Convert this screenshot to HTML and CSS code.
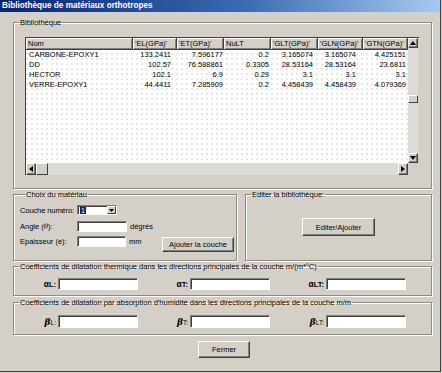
FILE: index.html
```html
<!DOCTYPE html>
<html lang="fr">
<head>
<meta charset="utf-8">
<title>Bibliothèque de matériaux orthotropes</title>
<link rel="stylesheet" href="styles.css">
</head>
<body>
<div class="window">
  <div class="titlebar">Bibliothèque de matériaux orthotropes</div>
  <div class="content">
    <fieldset class="group g-lib">
      <legend>Bibliothèque</legend>
      <div class="listview">
        <div class="list-main">
          <table class="grid">
            <colgroup>
              <col class="c-nom"><col class="c-el"><col class="c-et"><col class="c-nu"><col class="c-glt"><col class="c-gln"><col class="c-gtn">
            </colgroup>
            <thead>
              <tr><th>Nom</th><th>'EL(GPa)'</th><th>'ET(GPa)'</th><th>NuLT</th><th>'GLT(GPa)'</th><th>'GLN(GPa)'</th><th>'GTN(GPa)'</th></tr>
            </thead>
            <tbody>
              <tr><td>CARBONE-EPOXY1</td><td>133.2411</td><td>7.596177</td><td>0.2</td><td>3.165074</td><td>3.165074</td><td>4.425151</td></tr>
              <tr><td>DD</td><td>102.57</td><td>76.588861</td><td>0.3305</td><td>28.53164</td><td>28.53164</td><td>23.6811</td></tr>
              <tr><td>HECTOR</td><td>102.1</td><td>6.9</td><td>0.29</td><td>3.1</td><td>3.1</td><td>3.1</td></tr>
              <tr><td>VERRE-EPOXY1</td><td>44.4411</td><td>7.285909</td><td>0.2</td><td>4.458439</td><td>4.458439</td><td>4.079369</td></tr>
            </tbody>
          </table>
        </div>
        <div class="vscroll">
          <div class="sbtn sbtn-v"><svg width="6" height="4" viewBox="0 0 6 4"><polygon points="0,4 6,4 3,0" fill="#000"/></svg></div>
          <div class="vtrack"><div class="vthumb"></div></div>
          <div class="sbtn sbtn-v"><svg width="6" height="4" viewBox="0 0 6 4"><polygon points="0,0 6,0 3,4" fill="#000"/></svg></div>
        </div>
        <div class="hscroll">
          <div class="sbtn sbtn-h"><svg width="4" height="6" viewBox="0 0 4 6"><polygon points="4,0 4,6 0,3" fill="#000"/></svg></div>
          <div class="hthumb"></div>
          <div class="htrack"></div>
          <div class="sbtn sbtn-h"><svg width="4" height="6" viewBox="0 0 4 6"><polygon points="0,0 0,6 4,3" fill="#000"/></svg></div>
        </div>
        <div class="corner"></div>
      </div>
    </fieldset>

    <div class="row2">
      <fieldset class="group g-choix">
        <legend>Choix du matériau</legend>
        <div class="frow frow-1">
          <span class="flabel">Couche numéro:</span>
          <div class="combo">
            <div class="combo-field"><span class="combo-sel">1</span></div>
            <div class="combo-btn"><svg width="5" height="3" viewBox="0 0 5 3"><polygon points="0,0 5,0 2.5,3" fill="#000"/></svg></div>
          </div>
        </div>
        <div class="frow frow-2">
          <span class="flabel">Angle (<i>θ</i>):</span>
          <div class="input in-angle"></div>
          <span class="unit">dégrés</span>
        </div>
        <div class="frow frow-3">
          <span class="flabel">Epaisseur (e):</span>
          <div class="input in-ep"></div>
          <span class="unit unit-mm">mm</span>
          <button class="btn btn-ajouter">Ajouter la couche</button>
        </div>
      </fieldset>
      <fieldset class="group g-edit">
        <legend>Editer la bibliothèque:</legend>
        <button class="btn btn-editer">Editer/Ajouter</button>
      </fieldset>
    </div>

    <fieldset class="group g-therm">
      <legend>Coefficients de dilatation thermique dans les directions principales de la couche m/(m*°C)</legend>
      <div class="coefs">
        <span class="clabel cl-1"><b class="alpha">α</b><b>L:</b></span><div class="input cin"></div>
        <span class="clabel cl-2"><b class="alpha">α</b><b>T:</b></span><div class="input cin"></div>
        <span class="clabel cl-3"><b class="alpha">α</b><b>LT:</b></span><div class="input cin"></div>
      </div>
    </fieldset>

    <fieldset class="group g-humid">
      <legend>Coefficients de dilatation par absorption d'humidité dans les directions principales de la couche m/m</legend>
      <div class="coefs">
        <span class="clabel cl-1"><i class="beta">β</i><span class="sub">L:</span></span><div class="input cin"></div>
        <span class="clabel cl-2"><i class="beta">β</i><span class="sub">T:</span></span><div class="input cin"></div>
        <span class="clabel cl-3"><i class="beta">β</i><span class="sub">LT:</span></span><div class="input cin"></div>
      </div>
    </fieldset>

    <div class="footer">
      <button class="btn btn-fermer">Fermer</button>
    </div>
  </div>
</div>
</body>
</html>
```

FILE: styles.css
```css
html, body {
  margin: 0;
  padding: 0;
  background: #d4d0c8;
}
body {
  font-family: "Liberation Sans", Arial, sans-serif;
  font-size: 7.5px;
  color: #000;
}
.window {
  width: 441px;
  height: 372px;
  box-sizing: border-box;
  border-right: 1px solid #404040;
  border-bottom: 1px solid #404040;
  background: #d4d0c8;
  overflow: hidden;
}
.titlebar {
  height: 12px;
  line-height: 12px;
  padding-left: 2px;
  color: #fff;
  font-weight: bold;
  font-size: 8.2px;
  background: linear-gradient(to right, #0a246a 0%, #3a6ab0 55%, #a6caf0 100%);
}
.content {
  width: 419px;
  padding-left: 13px;
}

/* group boxes */
.group {
  margin: 0;
  padding: 0;
  min-width: 0;
  box-sizing: border-box;
  border: 1px solid #8e8a84;
  box-shadow: inset 1px 1px 0 #fff, 1px 1px 0 #fff;
}
.group legend {
  margin-left: 5px;
  padding: 2px 1px 0;
  line-height: 8px;
  font-size: 7.5px;
}
.g-lib {
  margin-top: 5px;
  width: 419px;
  height: 172px;
}

/* list view */
.listview {
  margin: 10px 0 0 11px;
  width: 393px;
  display: grid;
  grid-template-columns: 382px 10px;
  grid-template-rows: 125px 12px;
  border-left: 1px solid #404040;
  border-top: 1px solid #404040;
}
.list-main {
  overflow: hidden;
  background-color: #fff;
  background-image: radial-gradient(circle at 1px 1px, #d8d8d8 0.6px, transparent 0.9px);
  background-size: 5px 5px;
}
.grid {
  table-layout: fixed;
  border-collapse: separate;
  border-spacing: 0;
  width: 382px;
  font-size: 7.5px;
}
.c-nom { width: 107px; }
.c-el { width: 44px; }
.c-et { width: 47px; }
.c-nu { width: 47px; }
.c-glt { width: 47px; }
.c-gln { width: 45px; }
.c-gtn { width: 45px; }
.grid th {
  padding: 0 0 0 2px;
  line-height: 11px;
  font-weight: normal;
  text-align: left;
  white-space: nowrap;
  overflow: hidden;
  background: #d4d0c8;
  border-right: 1px solid #404040;
  border-bottom: 1px solid #404040;
  box-shadow: inset 1px 1px 0 #fff, inset -1px -1px 0 #808080;
}
.grid td {
  padding: 0 3px 0 0;
  line-height: 10px;
  white-space: nowrap;
  overflow: hidden;
  text-align: right;
}
.grid td:first-child { text-align: left; padding: 0 0 0 3px; }
.grid td:nth-child(2) { padding-right: 6px; }
.grid td:nth-child(3) { padding-right: 1px; text-overflow: clip; }
.grid td:nth-child(4) { padding-right: 2px; }
.grid td:nth-child(5) { padding-right: 5px; }
.grid td:nth-child(6) { padding-right: 7px; }
.grid td:nth-child(7) { padding-right: 2px; }

.sbtn {
  box-sizing: border-box;
  background: #d4d0c8;
  border: 1px solid;
  border-color: #fff #404040 #404040 #fff;
  box-shadow: inset -1px -1px 0 #808080;
  display: flex;
  align-items: center;
  justify-content: center;
}
.sbtn svg { display: block; }
.vscroll {
  display: flex;
  flex-direction: column;
}
.sbtn-v { height: 10px; }
.vtrack {
  flex: 1;
  background: #dedbd6;
}
.vthumb {
  margin-top: 47px;
  height: 8px;
  box-sizing: border-box;
  background: #d4d0c8;
  border: 1px solid;
  border-color: #fff #404040 #404040 #fff;
}
.hscroll {
  display: flex;
}
.sbtn-h { width: 10px; }
.hthumb {
  width: 12px;
  box-sizing: border-box;
  background: #d4d0c8;
  border: 1px solid;
  border-color: #fff #404040 #404040 #fff;
}
.htrack {
  flex: 1;
  background: #dedbd6;
}
.corner { background: #d4d0c8; }

/* second row */
.row2 {
  display: flex;
  gap: 8px;
}
.g-choix {
  width: 224px;
  height: 72px;
  padding-left: 6px;
}
.g-edit {
  width: 187px;
  height: 72px;
}
.frow {
  display: flex;
  align-items: center;
}
.frow-1 { margin-top: 6px; height: 10px; }
.frow-2 { margin-top: 6px; height: 11px; }
.frow-3 { margin-top: 4px; height: 11px; align-items: flex-start; }
.frow-3 .flabel, .frow-3 .unit { line-height: 11px; }
.flabel { width: 57px; white-space: nowrap; }
.frow-1 .flabel { letter-spacing: -0.1px; }
.flabel i { font-family: "DejaVu Serif", serif; font-size: 7px; }
.unit { width: 32px; padding-left: 3px; }

.input {
  box-sizing: border-box;
  background: #fff;
  border: 1px solid;
  border-color: #808080 #fff #fff #808080;
  box-shadow: inset 1px 1px 0 #404040;
}
.in-angle { width: 50px; height: 11px; }
.in-ep { width: 49px; height: 11px; }
.unit-mm { width: 33px; }

.combo {
  display: flex;
  width: 40px;
  height: 10px;
  box-sizing: border-box;
  border: 1px solid;
  border-color: #808080 #fff #fff #808080;
  box-shadow: inset 1px 1px 0 #404040;
  background: #fff;
}
.combo-field {
  flex: 1;
  padding: 1px 0 0 2px;
  line-height: 7px;
}
.combo-sel {
  display: inline-block;
  background: #0a246a;
  color: #fff;
  padding: 0 1px;
  font-size: 7px;
  line-height: 7px;
}
.combo-btn {
  width: 9px;
  box-sizing: border-box;
  background: #d4d0c8;
  border: 1px solid;
  border-color: #fff #404040 #404040 #fff;
  display: flex;
  align-items: center;
  justify-content: center;
}
.combo-btn svg { display: block; }

.btn {
  box-sizing: border-box;
  font-family: "Liberation Sans", Arial, sans-serif;
  font-size: 7.5px;
  color: #000;
  background: #d4d0c8;
  border: 1px solid;
  border-color: #fff #404040 #404040 #fff;
  box-shadow: inset -1px -1px 0 #808080;
  padding: 0;
  margin: 0;
  white-space: nowrap;
}
.btn-ajouter {
  width: 72px;
  height: 15px;
  margin-top: 1px;
}
.btn-editer {
  display: block;
  width: 73px;
  height: 18px;
  margin: 19px auto 0;
}

/* coefficient groups */
.g-therm {
  width: 419px;
  height: 35px;
}
.g-humid {
  width: 419px;
  height: 38px;
  margin-top: 1px;
}
.coefs {
  display: flex;
  align-items: center;
}
.g-therm .coefs { margin-top: 7px; }
.g-humid .coefs { margin-top: 8px; }
.clabel {
  text-align: right;
  margin-right: 2px;
  white-space: nowrap;
}
.cl-1 { width: 42px; }
.cl-2 { width: 50px; }
.cl-3 { width: 54px; }
.alpha { font-size: 8.5px; }
.clabel b { font-weight: bold; }
.beta {
  font-family: "DejaVu Serif", serif;
  font-size: 9px;
  font-weight: bold;
}
.sub { font-size: 6.5px; }
.cin { width: 80px; }
.g-therm .cin { height: 12px; }
.g-humid .cin { height: 13px; }

.footer {
  display: flex;
  justify-content: center;
  padding-left: 3px;
  margin-top: 6px;
}
.btn-fermer {
  width: 52px;
  height: 17px;
}
```
